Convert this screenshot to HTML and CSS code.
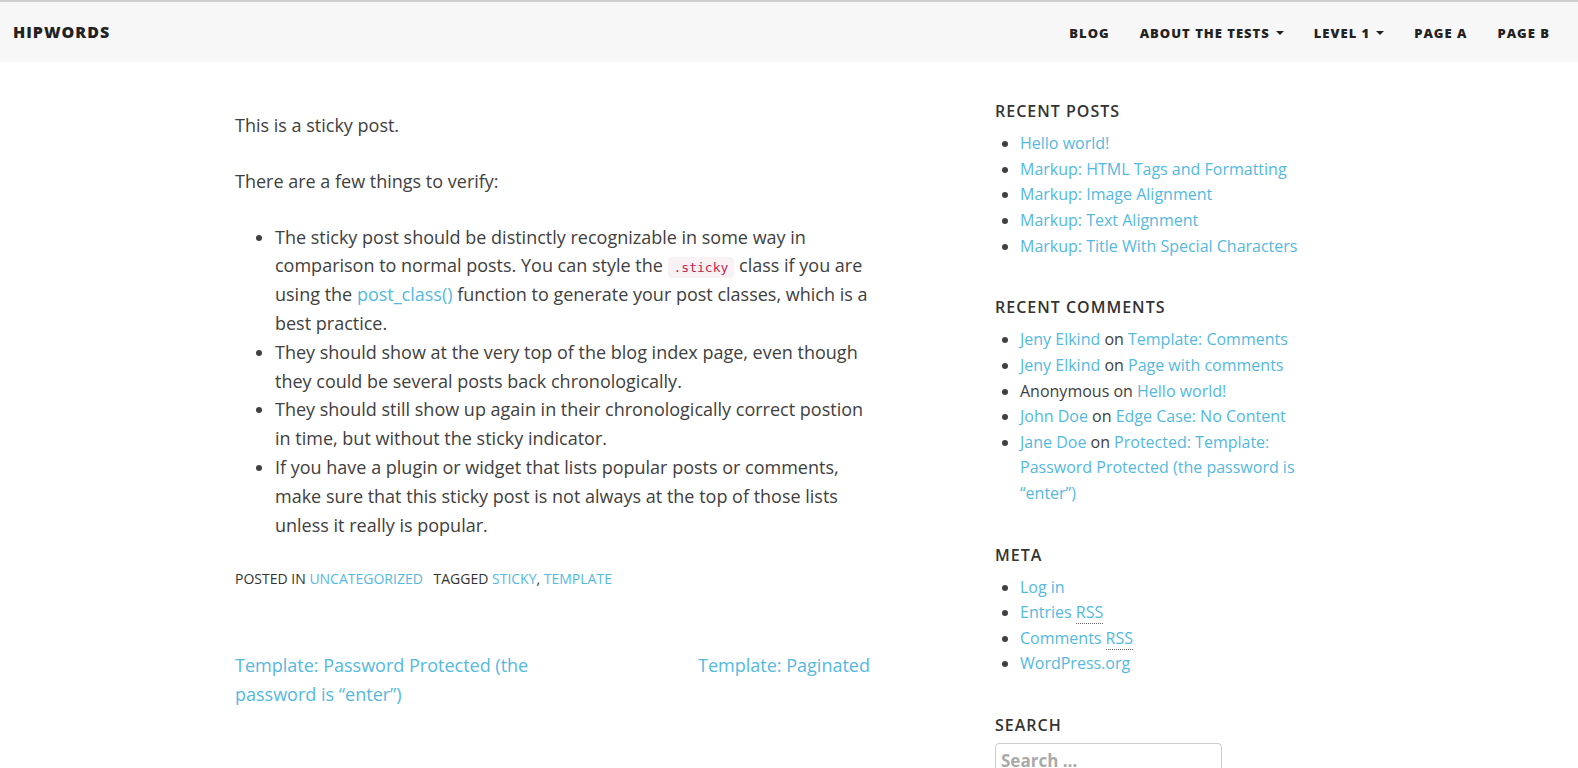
FILE: index.html
```html
<!DOCTYPE html>
<html lang="en">
<head>
<meta charset="utf-8">
<title>HIPWORDS</title>
<link rel="stylesheet" href="styles.css">
</head>
<body>
<header class="site-header">
  <a class="brand" href="#">HIPWORDS</a>
  <nav class="main-nav">
    <a href="#">Blog</a>
    <a href="#">About The Tests <span class="caret"></span></a>
    <a href="#">Level 1 <span class="caret"></span></a>
    <a href="#">Page A</a>
    <a href="#">Page B</a>
  </nav>
</header>
<div class="container">
  <main class="content">
    <article class="post">
      <div class="entry-content">
        <p>This is a sticky post.</p>
        <p>There are a few things to verify:</p>
        <ul>
          <li>The sticky post should be distinctly recognizable in some way in comparison to normal posts. You can style the <code>.sticky</code> class if you are using the <a href="#">post_class()</a> function to generate your post classes, which is a best practice.</li>
          <li>They should show at the very top of the blog index page, even though they could be several posts back chronologically.</li>
          <li>They should still show up again in their chronologically correct postion in time, but without the sticky indicator.</li>
          <li>If you have a plugin or widget that lists popular posts or comments, make sure that this sticky post is not always at the top of those lists unless it really is popular.</li>
        </ul>
      </div>
      <footer class="entry-footer">
        <span class="cat-links">Posted in <a href="#">Uncategorized</a></span>
        <span class="tags-links">Tagged <a href="#">sticky</a>, <a href="#">template</a></span>
      </footer>
    </article>
    <nav class="post-navigation">
      <div class="nav-previous"><a href="#">Template: Password Protected (the password is “enter”)</a></div>
      <div class="nav-next"><a href="#">Template: Paginated</a></div>
    </nav>
  </main>
  <aside class="sidebar">
    <section class="widget">
      <h2 class="widget-title">Recent Posts</h2>
      <ul>
        <li><a href="#">Hello world!</a></li>
        <li><a href="#">Markup: HTML Tags and Formatting</a></li>
        <li><a href="#">Markup: Image Alignment</a></li>
        <li><a href="#">Markup: Text Alignment</a></li>
        <li><a href="#">Markup: Title With Special Characters</a></li>
      </ul>
    </section>
    <section class="widget">
      <h2 class="widget-title">Recent Comments</h2>
      <ul>
        <li><a href="#">Jeny Elkind</a> on <a href="#">Template: Comments</a></li>
        <li><a href="#">Jeny Elkind</a> on <a href="#">Page with comments</a></li>
        <li>Anonymous on <a href="#">Hello world!</a></li>
        <li><a href="#">John Doe</a> on <a href="#">Edge Case: No Content</a></li>
        <li><a href="#">Jane Doe</a> on <a href="#">Protected: Template: Password Protected (the password is “enter”)</a></li>
      </ul>
    </section>
    <section class="widget">
      <h2 class="widget-title">Meta</h2>
      <ul>
        <li><a href="#">Log in</a></li>
        <li><a href="#">Entries <abbr title="Really Simple Syndication">RSS</abbr></a></li>
        <li><a href="#">Comments <abbr title="Really Simple Syndication">RSS</abbr></a></li>
        <li><a href="#">WordPress.org</a></li>
      </ul>
    </section>
    <section class="widget">
      <h2 class="widget-title">Search</h2>
      <form class="search-form">
        <input class="search-field" type="search" placeholder="Search …">
      </form>
    </section>
  </aside>
</div>
</body>
</html>
```
FILE: styles.css
```css
* { box-sizing: border-box; }

html, body {
  margin: 0;
  padding: 0;
  background: #fff;
}

body {
  font-family: "Open Sans", "Liberation Sans", sans-serif;
  font-size: 18px;
  line-height: 1.6;
  color: #404040;
  overflow: hidden;
}

a {
  color: #54b9e0;
  text-decoration: none;
}

.site-header {
  height: 62px;
  border-top: 2px solid #cfcfcf;
  background: #f7f7f7;
  display: flex;
  align-items: center;
  justify-content: space-between;
  padding: 2px 13px 0 13px;
}

.brand {
  font-size: 16px;
  font-weight: 800;
  letter-spacing: 1px;
  color: #222;
  text-transform: uppercase;
}

.main-nav {
  display: flex;
  align-items: center;
}

.main-nav a {
  font-size: 13px;
  font-weight: 800;
  letter-spacing: 1px;
  color: #222;
  text-transform: uppercase;
  padding: 0 15px;
  display: flex;
  align-items: center;
}

.caret {
  display: inline-block;
  width: 0;
  height: 0;
  margin-left: 6px;
  border-top: 4px solid #222;
  border-left: 4px solid transparent;
  border-right: 4px solid transparent;
}

.container {
  width: 1112px;
  margin: 0 auto;
  padding-left: 2px;
  padding-top: 40px;
  display: grid;
  grid-template-columns: 635px 350px;
  justify-content: space-between;
  align-items: start;
}

.post {
  padding-top: 9px;
}

.entry-content p {
  margin: 0 0 27px;
}

.entry-content ul {
  margin: 0 0 29px;
  padding-left: 40px;
}

code {
  font-family: "DejaVu Sans Mono", "Liberation Mono", monospace;
  font-size: 13px;
  color: #c7254e;
  background: #f9f2f4;
  padding: 3px 6px;
  border-radius: 4px;
}

.entry-footer {
  font-size: 14px;
  line-height: 1.6;
  text-transform: uppercase;
  color: #333;
}

.cat-links {
  margin-right: 7px;
}

.post-navigation {
  margin-top: 60px;
  display: grid;
  grid-template-columns: 1fr 1fr;
}

.nav-next {
  text-align: right;
}

.nav-previous {
  padding-right: 15px;
}

.widget {
  margin-bottom: 39px;
  font-size: 16px;
  line-height: 1.6;
}

.widget-title {
  margin: 0 0 10px;
  font-size: 16px;
  line-height: 1.2;
  font-weight: 600;
  letter-spacing: 1px;
  text-transform: uppercase;
  color: #333;
}

.widget ul {
  margin: 0;
  padding-left: 25px;
}

abbr {
  text-decoration: none;
  border-bottom: 1px dotted #666;
}

.search-field {
  width: 227px;
  height: 34px;
  margin-top: -2px;
  border: 1px solid #ccc;
  border-radius: 4px;
  padding: 2px 5px;
  font-family: "Open Sans", "Liberation Sans", sans-serif;
  font-size: 17px;
  font-weight: 700;
  color: #555;
}

.search-field::placeholder {
  color: #aaa;
}
```
